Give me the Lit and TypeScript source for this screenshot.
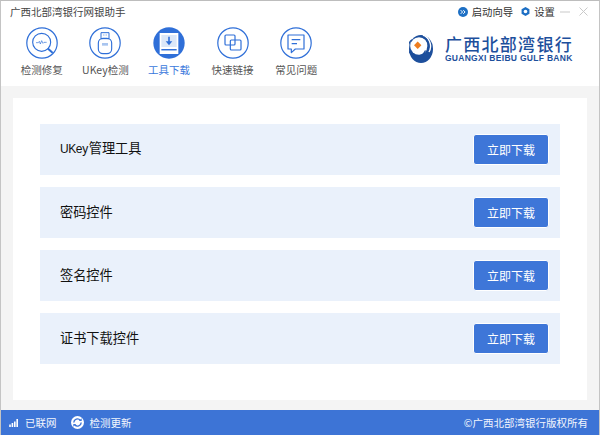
import { LitElement, html, css, svg } from "lit";
import { customElement } from "lit/decorators.js";

const B = "#2f6fd8";
const navIcons = [
  svg`<circle cx="23.500" cy="23" r="13.500" fill="none" stroke="${B}" stroke-width="1.700"/><path d="M33.500 33l5.500 5" stroke="${B}" stroke-width="3" stroke-linecap="round"/><path d="M15 23.500h3.500l1.500-2 1.500 4 2-5 2 4 1.500-1.500h4" fill="none" stroke="${B}" stroke-width="1"/>`,
  svg`<path d="M18 8.500h12v9H18z" fill="none" stroke="${B}" stroke-width="1.500"/><rect x="14" y="17" width="20" height="23" rx="7" fill="none" stroke="${B}" stroke-width="1.700"/><rect x="19.500" y="24" width="9" height="4" fill="#a9c5ef"/><path d="M21.500 12h1.500M25 12h1.500" stroke="${B}" stroke-width="1.200"/>`,
  svg`<path d="M10 9h28v31.500H10z" fill="#fff"/><path d="M12.500 12h23v18h-23z" fill="#dbe7f8"/><path d="M24 14.500v9" stroke="${B}" stroke-width="2.400"/><path d="M19 21.500h10l-5 6z" fill="${B}"/><path d="M12.500 33h23v2.200h-23z" fill="${B}"/>`,
  svg`<rect x="12" y="12" width="15" height="15" rx="1.500" fill="none" stroke="${B}" stroke-width="1.800"/><rect x="20" y="19.500" width="16" height="15" rx="1.500" fill="none" stroke="${B}" stroke-width="1.800"/>`,
  svg`<path d="M12 12h24v21H23l-6 5.500V33h-5z" fill="none" stroke="${B}" stroke-width="1.800" stroke-linejoin="round"/><path d="M17.500 19h13M17.500 25h8" stroke="${B}" stroke-width="1.700"/>`,
];
const nav = ["检测修复", "UKey检测", "工具下载", "快速链接", "常见问题"];
const rows = [
  ["UKey", "管理工具"],
  ["", "密码控件"],
  ["", "签名控件"],
  ["", "证书下载控件"],
];

@customElement("app-root")
export class AppRoot extends LitElement {
  static styles = css`
    :host { display: flex; flex-direction: column; width: 600px; height: 435px; box-sizing: border-box; overflow: hidden;
      background: #fff; border-top: 1px solid #bdbdbd; border-left: 1px solid #c4c4c4; border-right: 1px solid #c4c4c4;
      font-family: "Noto Sans CJK SC", "Liberation Sans", sans-serif; color: #333; }
    .head { height: 85px; flex: none; display: flex; flex-direction: column; }
    .titlebar { height: 21px; flex: none; display: flex; align-items: center; justify-content: space-between; padding: 0 11px 0 9px; font-size: 10.500px; line-height: 20px; }
    .title { color: #444; }
    .tools { display: flex; align-items: center; color: #333; font-size: 10.400px; }
    .tools svg { display: block; }
    .t1 { margin: 0 4px 0 0; }
    .t2 { margin: 0 4px 0 8px; }
    .t3 { margin-left: 5px; }
    .t4 { margin-left: 9px; }
    .navline { flex: 1; display: flex; justify-content: space-between; }
    .nav { display: flex; padding-left: 9px; }
    .item { width: 63.600px; display: flex; flex-direction: column; align-items: center; }
    .circle { display: block; width: 32px; height: 32px; margin-top: 5px; }
    .lbl { margin-top: 4px; font-size: 10.500px; line-height: 14px; color: #555; white-space: nowrap; }
    .on { color: #3a78dc; }
    .brand { display: flex; align-items: center; padding: 11px 26px 0 0; height: 30px; }
    .brand svg { display: block; margin-right: 11px; }
    .bt { display: flex; flex-direction: column; color: #1d4f9c; }
    .cn { font-size: 17px; line-height: 20px; font-weight: 500; letter-spacing: 1.300px; white-space: nowrap; }
    .en { font-family: "Liberation Sans", sans-serif; font-size: 8.500px; line-height: 9px; font-weight: 700; letter-spacing: .3px; white-space: nowrap; }
    .main { flex: 1; background: #f4f4f4; padding: 12px 12px 10px; display: flex; min-height: 0; }
    .panel { flex: 1; background: #fff; padding: 26px 27px; display: flex; flex-direction: column; gap: 12px; }
    .row { height: 51px; flex: none; background: #eaf1fb; display: flex; align-items: center; justify-content: space-between; padding: 0 11px 0 20px; }
    .name { font-size: 13.200px; line-height: 18px; color: #111; padding-bottom: 2px; }
    .lat { font-family: "Liberation Sans", sans-serif; font-size: 12px; letter-spacing: -.4px; margin-right: 1px; }
    .btn { width: 76px; height: 31px; box-sizing: border-box; background: #3e76d8; color: #fff; border: 1px solid #fff; border-radius: 3px; font: inherit; font-size: 12px; padding: 0; }
    .foot { height: 25px; flex: none; margin: 0 -1px; background: #3d74d6; color: #f2f6fd; display: flex; align-items: center; font-size: 10.500px; padding: 0 12px 0 8px; }
    .foot svg { display: block; }
    .net { margin-left: 5px; }
    .sync { margin-left: 14px; }
    .upd { margin-left: 6px; }
    .copy { margin-left: auto; }
  `;

  render() {
    return html`
      <div class="head">
        <div class="titlebar">
          <span class="title">广西北部湾银行网银助手</span>
          <div class="tools">
            <svg class="t1" width="10" height="10" viewBox="0 0 11 11"><circle cx="5.500" cy="5.500" r="5.500" fill="#1d6fc4"/><path d="M3 3.500l2 2-2 2M5.800 3.500l2 2-2 2" fill="none" stroke="#fff" stroke-width="1.100"/></svg>
            <span>启动向导</span>
            <svg class="t2" width="9" height="9" viewBox="0 0 11 11"><path d="M5.500 0l4.800 2.750v5.500L5.500 11 .7 8.250v-5.500z" fill="#1d6fc4"/><circle cx="5.500" cy="5.500" r="2.200" fill="#fff"/></svg>
            <span>设置</span>
            <svg class="t3" width="10" height="10" viewBox="0 0 10 10"><path d="M0 5h10" stroke="#c9c9c9" stroke-width="1"/></svg>
            <svg class="t4" width="9" height="9" viewBox="0 0 9 9"><path d="M.5.500l8 8M8.500.500l-8 8" stroke="#c9c9c9" stroke-width="1"/></svg>
          </div>
        </div>
        <div class="navline">
          <div class="nav">
            ${nav.map((t, i) => html`<div class="item">
              <svg class="circle" viewBox="0 0 48 48">
                ${i === 2
                  ? svg`<circle cx="24" cy="24" r="23.500" fill="${B}"/>`
                  : svg`<circle cx="24" cy="24" r="22.800" fill="none" stroke="${B}" stroke-width="1.800"/>`}
                ${navIcons[i]}
              </svg>
              <span class="lbl ${i === 2 ? "on" : ""}">${t}</span>
            </div>`)}
          </div>
          <div class="brand">
            <svg width="25" height="29" viewBox="0 0 25 29">
              <ellipse cx="12" cy="15" rx="12" ry="14" fill="#1d4f9c"/>
              <circle cx="10" cy="12" r="8.800" fill="#fff"/>
              <path d="M3.500 5.500a9 9 0 1 0 13 11" fill="none" stroke="#1d4f9c" stroke-width="1.300"/>
              <path d="M14 1a12 12 0 0 1 6 17" fill="none" stroke="#fff" stroke-width="1.400"/>
              <path d="M14.500 3a10 10 0 0 1 4 13" fill="none" stroke="#1d4f9c" stroke-width="2"/>
              <path d="M8.700 7.500l3.700 3.700-3.700 3.700L5 11.200z" fill="#ee7d1f"/>
            </svg>
            <div class="bt"><span class="cn">广西北部湾银行</span><span class="en">GUANGXI BEIBU GULF BANK</span></div>
          </div>
        </div>
      </div>
      <div class="main">
        <div class="panel">
          ${rows.map(([l, r]) => html`<div class="row"><span class="name">${l ? html`<span class="lat">${l}</span>` : ""}${r}</span><button class="btn">立即下载</button></div>`)}
        </div>
      </div>
      <div class="foot">
        <svg width="12" height="8" viewBox="0 0 12 10"><path d="M0 7h2v3H0zM3 5h2v5H3zM6 3h2v7H6zM9 0h2v10H9z" fill="#fff"/></svg>
        <span class="net">已联网</span>
        <svg class="sync" width="13" height="13" viewBox="0 0 14 14"><circle cx="7" cy="7" r="7" fill="#fff"/><path d="M3 7a4 4 0 0 1 7-2.500M11 7a4 4 0 0 1-7 2.500" fill="none" stroke="#3d74d6" stroke-width="1.500"/><path d="M8.500 5.500h3v-3zM5.500 8.500h-3v3z" fill="#3d74d6"/></svg>
        <span class="upd">检测更新</span>
        <span class="copy">©广西北部湾银行版权所有</span>
      </div>
    `;
  }
}
